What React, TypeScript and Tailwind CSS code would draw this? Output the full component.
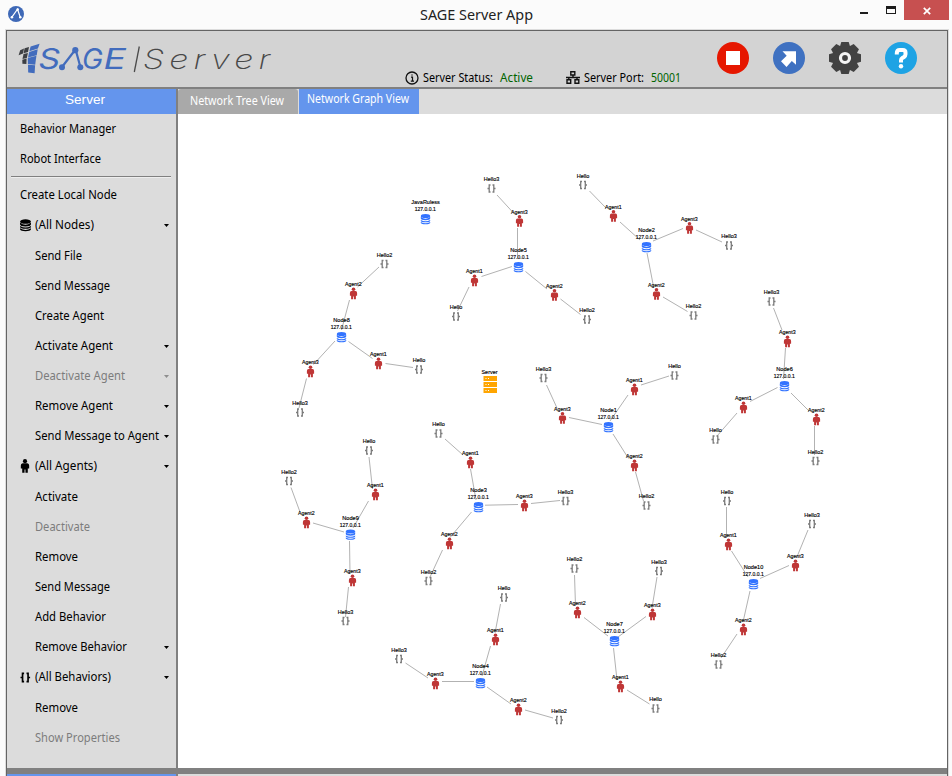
import React from "react";

type Item = { label: string; kind?: "db" | "agent" | "code"; indent?: boolean; arrow?: boolean; disabled?: boolean; w: number };

const topItems: Item[] = [
  { label: "Behavior Manager", w: 96 },
  { label: "Robot Interface", w: 81 },
];
const items: Item[] = [
  { label: "Create Local Node", w: 97 },
  { label: "(All Nodes)", kind: "db", arrow: true, w: 59 },
  { label: "Send File", indent: true, w: 47 },
  { label: "Send Message", indent: true, w: 75 },
  { label: "Create Agent", indent: true, w: 69 },
  { label: "Activate Agent", indent: true, arrow: true, w: 78 },
  { label: "Deactivate Agent", indent: true, arrow: true, disabled: true, w: 90 },
  { label: "Remove Agent", indent: true, arrow: true, w: 78 },
  { label: "Send Message to Agent", indent: true, arrow: true, w: 124 },
  { label: "(All Agents)", kind: "agent", arrow: true, w: 62 },
  { label: "Activate", indent: true, w: 43 },
  { label: "Deactivate", indent: true, disabled: true, w: 55 },
  { label: "Remove", indent: true, w: 43 },
  { label: "Send Message", indent: true, w: 75 },
  { label: "Add Behavior", indent: true, w: 71 },
  { label: "Remove Behavior", indent: true, arrow: true, w: 92 },
  { label: "(All Behaviors)", kind: "code", arrow: true, w: 76 },
  { label: "Remove", indent: true, w: 43 },
  { label: "Show Properties", indent: true, disabled: true, w: 85 },
];

/* Text squeezed to a fixed advance width. */
function Fit({ text, w, size = 12, color = "#000", family = "'Noto Sans', sans-serif" }: { text: string; w: number; size?: number; color?: string; family?: string }) {
  return (
    <svg width={w} height={20} className="block shrink-0 overflow-visible">
      <text x="0" y="14" textLength={w} lengthAdjust="spacingAndGlyphs" fontFamily={family} fontSize={size} fill={color}>
        {text}
      </text>
    </svg>
  );
}

function Db({ color }: { color: string }) {
  return (
    <g fill={color}>
      <ellipse cx="0" cy="-3" rx="4.7" ry="2" />
      <path d="M-4.7 -2.2Q0 1.6 4.7 -2.2V-.4Q4.5 1.2 0 1.3Q-4.5 1.2 -4.7 -.4Z" />
      <path d="M-4.7 .9Q0 3.6 4.7 .9V1.7Q4.5 3.2 0 3.3Q-4.5 3.2 -4.7 1.7Z" />
      <path d="M-4.7 2.9Q0 5.6 4.7 2.9V3.9Q4 5.3 0 5.3Q-4 5.3 -4.7 3.9Z" />
    </g>
  );
}
function Person({ color }: { color: string }) {
  return (
    <g fill={color}>
      <circle cx="0" cy="-4.2" r="1.8" />
      <path d="M-2 -2.4H2Q3.6 -2.2 3.6 -.4V2.2H2.4V5.8H.4V3H-.4V5.8H-2.4V2.2H-3.6V-.4Q-3.6 -2.2 -2 -2.4Z" />
    </g>
  );
}
function Braces({ color, width }: { color: string; width: number }) {
  return (
    <g fill="none" stroke={color} strokeWidth={width}>
      <path d="M-1 -3.5H-2.3V3.5H-1M-2.3 0H-4" />
      <path d="M1 -3.5H2.3V3.5H1M2.3 0H4" />
    </g>
  );
}

function Row({ it }: { it: Item }) {
  return (
    <div className={it.kind ? "flex h-[31px] items-center pb-px pl-[13px]" : it.indent ? "flex h-[30px] items-center pl-[28px]" : "flex h-[30px] items-center pl-[13px]"}>
      {it.kind && (
        <svg width="15" height="16" viewBox="-5.5 -8 15 16" className="shrink-0 overflow-visible">
          {it.kind === "db" && <g transform="scale(1.16)"><Db color="#000" /></g>}
          {it.kind === "agent" && <g transform="translate(-.5 0) scale(1.16)"><Person color="#000" /></g>}
          {it.kind === "code" && <g transform="translate(-.2 .5) scale(1.2)"><Braces color="#000" width={1.4} /></g>}
        </svg>
      )}
      <Fit text={it.label} w={it.w} color={it.disabled ? "#7c7c7c" : "#000"} />
      {it.arrow && (
        <svg width="5" height="3" className="mr-[7px] ml-auto">
          <path d="M0 0H5L2.5 3Z" fill={it.disabled ? "#8e8e8e" : "#000"} />
        </svg>
      )}
    </div>
  );
}

/* [label, icon x, icon y]; labels starting with A are agents, H behaviors, the rest nodes */
const nodes: [string, number, number][] = [
  ["JavaRuless", 425.5, 219],
  ["Node5", 518.5, 267], ["Agent3", 519.5, 221], ["Hello3", 491.5, 188.5], ["Agent1", 474.5, 280.5], ["Hello", 456, 316.5], ["Agent2", 554.5, 295], ["Hello2", 587, 319.5],
  ["Node2", 646.5, 247], ["Agent1", 613.5, 216], ["Hello", 583, 185], ["Agent3", 689.5, 228], ["Hello3", 729, 245.5], ["Agent2", 656.5, 294], ["Hello2", 693.5, 315.5],
  ["Node8", 341.5, 337], ["Agent2", 353.5, 293.5], ["Hello2", 384.5, 264], ["Agent1", 378.5, 363.5], ["Hello", 419, 369.5], ["Agent3", 310.5, 371.5], ["Hello3", 300, 412.5],
  ["Node1", 608.5, 427], ["Agent3", 562.5, 418], ["Hello3", 543.5, 378], ["Agent1", 634.5, 389.5], ["Hello", 674.5, 375.5], ["Agent2", 634.5, 465.5], ["Hello2", 646.5, 505.5],
  ["Node6", 784.5, 386], ["Agent3", 787.5, 341.5], ["Hello3", 771.5, 301.5], ["Agent1", 743.5, 407.5], ["Hello", 715.5, 439.5], ["Agent2", 816.5, 419.5], ["Hello2", 815.5, 461],
  ["Node3", 478.5, 507], ["Agent1", 470.5, 462.5], ["Hello", 438.5, 433.5], ["Agent3", 524.5, 505.5], ["Hello3", 565.5, 501], ["Agent2", 449.5, 543.5], ["Hello2", 428.5, 581],
  ["Node9", 350.5, 534.5], ["Agent1", 375.5, 494.5], ["Hello", 369, 450.5], ["Agent2", 306.5, 522.5], ["Hello2", 289, 481], ["Agent3", 352.5, 580.5], ["Hello3", 345.5, 621],
  ["Node4", 480.5, 683], ["Agent1", 495.5, 639.5], ["Hello", 504, 597.5], ["Agent3", 435.5, 683.5], ["Hello3", 399, 659], ["Agent2", 518.5, 709.5], ["Hello2", 559, 720],
  ["Node7", 614.5, 641], ["Agent2", 577.5, 612.5], ["Hello2", 574.5, 568.5], ["Agent3", 652.5, 614.5], ["Hello3", 659, 571], ["Agent1", 620.5, 686.5], ["Hello", 655.5, 708.5],
  ["Node10", 753.5, 584], ["Agent1", 728.5, 544.5], ["Hello", 727, 501], ["Agent3", 795.5, 565.5], ["Hello3", 812, 524], ["Agent2", 743.5, 629.5], ["Hello2", 718.5, 664.5],
];

const edges: number[][] = [
  [497, 195, 513.5, 213], [517.5, 228, 517.5, 259], [481.5, 276.5, 512, 266.5], [469, 287, 457.5, 311], [525.5, 271.5, 547, 289], [560.5, 299, 580.5, 314.5],
  [589.5, 191, 606, 208], [620, 222, 640, 240], [653, 241, 683, 228.5], [696, 230, 722, 242], [647, 253, 653.5, 286.5], [663, 297, 687.5, 311.5],
  [379, 267, 357.5, 287], [349.5, 300, 341.5, 330], [348.5, 341.5, 372.5, 358.5], [385.5, 363.5, 413, 367.5], [335, 341, 313.5, 364.5], [306.5, 378.5, 299, 408],
  [546.5, 385, 557, 408], [569, 417.5, 602, 424.5], [628, 395, 610, 421], [641, 385, 669, 376], [613, 434, 628.5, 458.5], [635.5, 472, 643.5, 501],
  [785.5, 348, 783.5, 379], [773.5, 308, 782, 330], [777.5, 387.5, 750, 401.5], [737, 413, 717, 436], [791, 393, 809, 411], [814.5, 426, 814.5, 455],
  [445, 439, 463, 455], [470.5, 469, 476, 500], [485, 505.2, 518, 504.5], [531, 503.5, 560, 500.5], [471.5, 512, 450, 537.5], [442.5, 550, 430, 577],
  [368.5, 501, 353, 528], [369, 457, 372.5, 489], [313, 523, 344, 532], [291, 487.5, 300, 512], [349.5, 541, 350, 574], [348.5, 587, 345.5, 617],
  [490.5, 646, 482, 676], [500.5, 604, 495, 633], [442, 681.5, 474, 681.5], [405.5, 663, 428, 678], [487, 687, 511, 704], [525, 710, 553, 718],
  [584, 617.5, 608, 636], [574.5, 575, 575.5, 606], [646, 616.5, 618, 637], [657, 577, 652, 608], [613.5, 648, 617, 680], [627, 690, 649.5, 704],
  [731.5, 551, 748, 577], [726.5, 507, 726.5, 538], [789, 565.5, 760, 578.5], [808, 530, 796.5, 558], [750, 591, 743, 622], [737, 634, 721, 658],
];

function Label({ text, x, y, w }: { text: string; x: number; y: number; w: number }) {
  return (
    <text x={x - w / 2} y={y} textLength={w} lengthAdjust="spacingAndGlyphs" fontFamily="'Liberation Sans', Arial, sans-serif" fontSize="5.6" fill="#000" stroke="#000" strokeWidth="0.15">
      {text}
    </text>
  );
}

function Graph() {
  return (
    <svg width="769" height="654" viewBox="178 114 769 654" className="block">
      {edges.map((e, i) => (
        <line key={i} x1={e[0]} y1={e[1]} x2={e[2]} y2={e[3]} stroke="#b2b2b2" strokeWidth="1" />
      ))}
      {nodes.map(([label, x, y], i) => {
        const c = label[0];
        if (c === "A")
          return (
            <g key={i}>
              <g transform={`translate(${x} ${y})`}><Person color="#bf3636" /></g>
              <Label text={label} x={x - 0.2} y={y - 7.5} w={16.5} />
            </g>
          );
        if (c === "H")
          return (
            <g key={i}>
              <g transform={`translate(${x} ${y})`}><Braces color="#7c7c7c" width={1.3} /></g>
              <Label text={label} x={x} y={y - 7.2} w={label.length > 5 ? 15.5 : 12.5} />
            </g>
          );
        return (
          <g key={i}>
            <g transform={`translate(${x} ${y})`}><Db color="#3273ff" /></g>
            <Label text={label} x={x} y={y - 15} w={label === "JavaRuless" ? 28.5 : label === "Node10" ? 19.5 : 16.5} />
            <Label text="127.0.0.1" x={x - 0.3} y={y - 8} w={21} />
          </g>
        );
      })}
      <Label text="Server" x={489.5} y={374} w={16} />
      {[376, 382, 388].map((y) => (
        <g key={y}>
          <rect x="483.5" y={y} width="13.5" height="5" fill="#ffa500" />
          <path d={`M485.5 ${y + 2.5}h1M488 ${y + 2.5}h1`} stroke="#fff" strokeWidth="1.1" />
        </g>
      ))}
    </svg>
  );
}

function Logo() {
  return (
    <svg width="254" height="32" viewBox="18 42 254 32" className="block overflow-visible">
      <g fill="#3d3f43">
        <path d="M20.2 50.3L24 48.6L23 53.5L18.6 55.2Z" />
        <path d="M24.6 48.2L29 46.9L28 51.9L23.6 53.2Z" />
        <path d="M23.5 54.1L27.9 53L26.8 57.9L22.5 59.1Z" />
        <path d="M22.3 59.8L26.6 58.6L26.4 64L22.4 63.7Z" />
      </g>
      <g fill="#426cbd">
        <path d="M30.6 46.4L39.6 43.8L37.9 48.6L29.4 51.3Z" />
        <path d="M29.2 52L37.7 49.3L36.7 55.2L28 57.4Z" />
        <path d="M27.8 58L36.4 55.8L35.2 64.7L27.9 63.9Z" />
        <path d="M28 64.7L35.1 65.3L34.6 73.2L28.2 72.6Z" />
      </g>
      <g fill="#426cbd" fontFamily="Inter, sans-serif" fontStyle="italic" fontSize="28" fontWeight="400">
        <text x="38.5" y="69" textLength="21.5" lengthAdjust="spacingAndGlyphs">S</text>
        <text x="82" y="69" textLength="21" lengthAdjust="spacingAndGlyphs">G</text>
        <text x="103.5" y="69" textLength="22.5" lengthAdjust="spacingAndGlyphs">E</text>
      </g>
      <path d="M62 67L74.7 50.5M76 51L80.4 67" fill="none" stroke="#426cbd" strokeWidth="2.2" />
      <g fill="#426cbd">
        <circle cx="75.3" cy="50.2" r="3.1" />
        <circle cx="62" cy="67.3" r="3" />
        <circle cx="80.3" cy="67.3" r="3" />
      </g>
      <path d="M139.3 46.5L134.3 72" stroke="#4b4b4b" strokeWidth="1.3" />
      <text transform="translate(143 69) scale(1.24 1)" textLength="102.5" lengthAdjust="spacing" fontFamily="Inter, sans-serif" fontStyle="italic" fontWeight="200" fontSize="27.5" fill="#484848">Server</text>
    </svg>
  );
}

function HeaderIcons() {
  return (
    <div className="flex gap-6">
      <svg width="32" height="32"><circle cx="16" cy="16" r="16" fill="#e61700" /><path d="M9 9H23V23H9Z" fill="#fff" /></svg>
      <svg width="32" height="32"><circle cx="16" cy="16" r="16" fill="#3f71c1" /><path d="M9.5 9.2H23V22.8L18.8 18.9L13.5 25L8 19.3L13.7 13.8Z" fill="#fff" /></svg>
      <svg width="32" height="32" viewBox="-16 -16 32 32">
        <g fill="#424242">
          <circle r="12.7" />
          {[0, 45, 90, 135, 180, 225, 270, 315].map((a) => (
            <path key={a} transform={`rotate(${a})`} d="M-5.2 -11L-3.7 -16H3.7L5.2 -11Z" />
          ))}
        </g>
        <circle r="4.5" fill="none" stroke="#f5f5f5" strokeWidth="3.2" />
      </svg>
      <svg width="32" height="32">
        <circle cx="16" cy="16" r="16" fill="#1ea3e4" />
        <path d="M11.8 12.5V11.2Q11.8 8 14.8 8H17.8Q20.5 8 20.5 10.5V12.3Q20.5 14 19 15L17.3 16Q16 16.8 16 18.2V20.5" fill="none" stroke="#fff" strokeWidth="4" />
        <circle cx="16" cy="24.3" r="2.2" fill="#fff" />
      </svg>
    </div>
  );
}

export default function App() {
  return (
    <div className="flex h-[776px] w-[952px] flex-col overflow-hidden bg-[#fbfbfb]">
      <div className="flex h-[29px] shrink-0 items-start">
        <svg width="16" height="16" viewBox="0 0 16 16" className="mt-[6px] ml-2 shrink-0">
          <circle cx="8" cy="8" r="8" fill="#3f69b7" />
          <path d="M3.7 11.3L9.5 3.2L12.3 11.2" fill="none" stroke="#fff" strokeWidth="1.2" />
          <g fill="#fff"><circle cx="3.9" cy="11.3" r="1.3" /><circle cx="9.7" cy="3.6" r="1.3" /><circle cx="12.3" cy="11.3" r="1.3" /></g>
        </svg>
        <div className="ml-[396px] pt-[6px]"><Fit text="SAGE Server App" w={113} size={15} color="#222" /></div>
        <svg width="38" height="20" className="ml-auto shrink-0"><path d="M0 12H8V14H0Z M26 6H36V14H26Z M27 9H35V13H27Z" fill="#1c1c1c" fillRule="evenodd" /></svg>
        <div className="mr-[3px] ml-[6px] flex h-5 w-[45px] shrink-0 items-center justify-center bg-[#c75050]">
          <svg width="8" height="8" className="mt-px ml-px"><path d="M.8 .8L7.2 7.2M7.2 .8L.8 7.2" stroke="#fff" strokeWidth="1.7" /></svg>
        </div>
      </div>
      <div className="mr-[3px] ml-[5px] flex min-h-0 flex-1 flex-col border-x border-t border-[#dcdcdc]">
        <div className="flex min-h-0 flex-1 flex-col border-x border-t border-[#646464] bg-[#dcdcdc]">
          <div className="flex h-[58px] shrink-0 border-b-2 border-[#808080] bg-[#d3d3d3]">
            <div className="w-[398px] pt-[11px] pl-[11px]"><Logo /></div>
            <div className="flex items-center pt-[37px]">
              <svg width="14" height="14" viewBox="0 0 14 14" className="shrink-0"><circle cx="7" cy="7" r="6" fill="none" stroke="#111" strokeWidth="1.3" /><path d="M6 6.2H7.5V10M5.8 10.2H9M6.3 4H7.7" fill="none" stroke="#111" strokeWidth="1.2" /></svg>
              <div className="ml-1 pt-px"><Fit text="Server Status:" w={70} /></div>
              <div className="ml-[7px] pt-px"><Fit text="Active" w={33} color="#006400" /></div>
              <svg width="14" height="13" viewBox="0 0 14 13" className="ml-[33px] shrink-0"><path d="M4.8 .7H8.8V4H4.8ZM1 8.7H4.7V12.2H1ZM9 8.7H12.8V12.2H9ZM7 4V6.4M0 6.5H14M2.8 6.5V9M11 6.5V9" fill="none" stroke="#111" strokeWidth="1.4" /></svg>
              <div className="ml-1 pt-px"><Fit text="Server Port:" w={60} /></div>
              <div className="ml-[7px] pt-px"><Fit text="50001" w={30} color="#006400" /></div>
            </div>
            <div className="mr-[30px] ml-auto pt-[11px]"><HeaderIcons /></div>
          </div>
          <div className="flex h-[679px] shrink-0">
            <div className="w-[171px] shrink-0 border-r-2 border-[#808080]">
              <div className="flex h-[25px] justify-center bg-[#6495ed] pr-[13px] pt-px"><div className="w-10"><Fit text="Server" w={40} size={13} color="#fff" family="'Liberation Sans', sans-serif" /></div></div>
              {topItems.map((it) => <Row key={it.label} it={it} />)}
              <div className="h-[6px] pt-[2px] pr-[5px] pl-1"><div className="h-[2px] border-t border-b border-t-[#808080] border-b-[#eeeeee]" /></div>
              {items.map((it, i) => <Row key={i} it={it} />)}
            </div>
            <div className="flex min-w-0 flex-1 flex-col bg-white">
              <div className="flex h-[25px] shrink-0 gap-px bg-[#dcdcdc]">
                <div className="flex w-[120px] rounded-t-[3px] bg-[#a9a9a9] pt-[2px] pl-3"><Fit text="Network Tree View" w={94} color="#fff" /></div>
                <div className="flex w-[120px] bg-[#6495ed] pl-2"><Fit text="Network Graph View" w={102} color="#fff" /></div>
              </div>
              <Graph />
            </div>
          </div>
          <div className="h-[6px] shrink-0 bg-[#808080]" />
          <div className="flex flex-1">
            <div className="w-[169px] bg-[#6495ed]" />
            <div className="w-[2px] bg-[#808080]" />
            <div className="flex-1 bg-[#dcdcdc]" />
          </div>
        </div>
      </div>
    </div>
  );
}
